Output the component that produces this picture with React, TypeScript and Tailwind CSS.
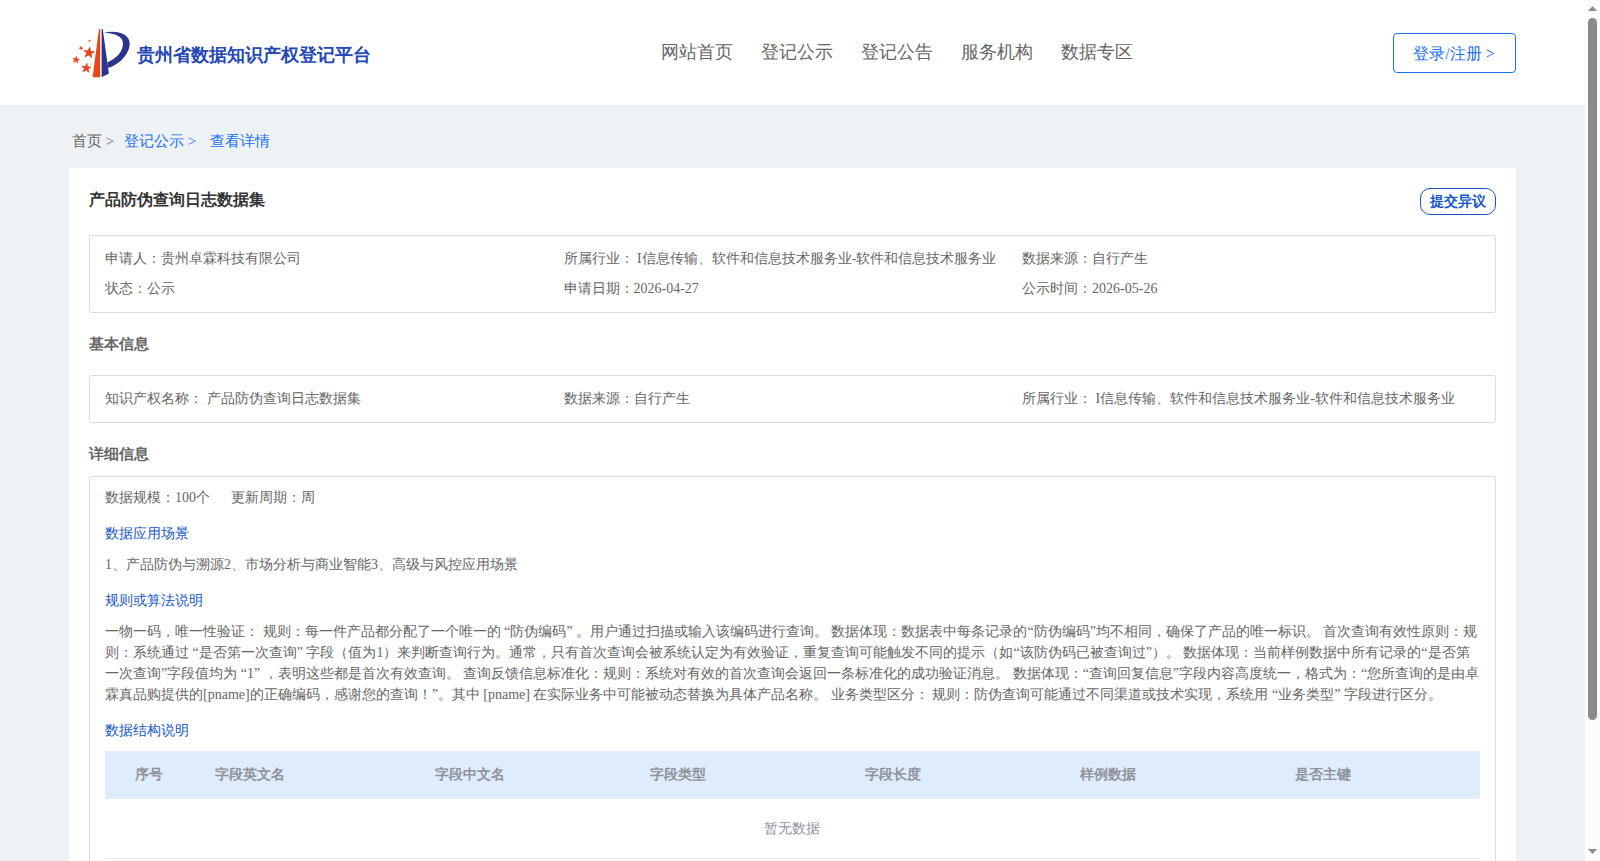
import React from 'react'

const NAV_ITEMS = ['网站首页', '登记公示', '登记公告', '服务机构', '数据专区']

const SUMMARY = [
  '申请人：贵州卓霖科技有限公司',
  '所属行业： I信息传输、软件和信息技术服务业-软件和信息技术服务业',
  '数据来源：自行产生',
  '状态：公示',
  '申请日期：2026-04-27',
  '公示时间：2026-05-26',
]

const BASIC = [
  '知识产权名称： 产品防伪查询日志数据集',
  '数据来源：自行产生',
  '所属行业： I信息传输、软件和信息技术服务业-软件和信息技术服务业',
]

const RULES =
  '一物一码，唯一性验证： 规则：每一件产品都分配了一个唯一的 “防伪编码” 。用户通过扫描或输入该编码进行查询。 数据体现：数据表中每条记录的“防伪编码”均不相同，确保了产品的唯一标识。 首次查询有效性原则：规则：系统通过 “是否第一次查询” 字段（值为1）来判断查询行为。通常，只有首次查询会被系统认定为有效验证，重复查询可能触发不同的提示（如“该防伪码已被查询过”）。 数据体现：当前样例数据中所有记录的“是否第一次查询”字段值均为 “1” ，表明这些都是首次有效查询。 查询反馈信息标准化：规则：系统对有效的首次查询会返回一条标准化的成功验证消息。 数据体现：“查询回复信息”字段内容高度统一，格式为：“您所查询的是由卓霖真品购提供的[pname]的正确编码，感谢您的查询！”。其中 [pname] 在实际业务中可能被动态替换为具体产品名称。 业务类型区分： 规则：防伪查询可能通过不同渠道或技术实现，系统用 “业务类型” 字段进行区分。'

const COLUMNS = ['字段英文名', '字段中文名', '字段类型', '字段长度', '样例数据', '是否主键']

const STAR = '0,-1 .25,-.32 .95,-.31 .4,.12 .59,.81 0,.4 -.59,.81 -.4,.12 -.95,-.31 -.25,-.32'

const STARS = [
  { x: 17, y: 24.8, r: 5.4, a: 8 },
  { x: 14.3, y: 40.2, r: 4.7, a: 5 },
  { x: 4, y: 31.8, r: 3.5, a: 10 },
  { x: 9, y: 20, r: 2.1, a: 30 },
  { x: 17.6, y: 12.9, r: 1.3, a: 10 },
]

const Logo: React.FC = () => (
  <svg className="h-[50px] w-[58px]" viewBox="0 0 58 50">
    {STARS.map((s) => (
      <polygon
        key={s.x + s.y}
        points={STAR}
        fill="#e8431a"
        stroke="#e8431a"
        strokeWidth={0.16}
        transform={`translate(${s.x} ${s.y}) rotate(${s.a}) scale(${s.r})`}
      />
    ))}
    <path d="M27 1h1.2v48.3h-7.6z" fill="#e64516" />
    <path d="M29.6 1h1.1l6.2 44.6-7.3 3.7z" fill="#2b3488" />
    <path d="M32.5 4.4C46 2 57.7 6 57.7 15.5 57.7 26 47 37 36 39.8l-.6-5.4C44 30.5 50.5 24.5 51 16 51.3 8.4 43 5.4 32.5 4.8z" fill="#2b3488" />
  </svg>
)

const SubTitle: React.FC<{ children: React.ReactNode }> = ({ children }) => (
  <h4 className="leading-[21px] text-[#1557cc]">{children}</h4>
)

const InfoBox: React.FC<{ items: string[] }> = ({ items }) => (
  <div className="grid grid-cols-[458.5px_458.6px_1fr] rounded-[3px] border border-[#dcdcdc] px-[15px] pt-2 pb-2">
    {items.map((item, i) => (
      <div key={i} className="h-[30px] leading-[30px] whitespace-nowrap">{item}</div>
    ))}
  </div>
)

export default function App() {
  return (
    <div className="flex h-[861px] overflow-hidden bg-[#eef2f5] font-['Liberation_Serif',serif] text-sm text-[#666]">
      <div className="w-[1585px]">
        <header className="flex h-[105px] items-start bg-white pr-[69px] pl-[72px]">
          <div className="flex w-[588.5px] items-center pt-7">
            <Logo />
            <span className="ml-[7px] pt-1 text-lg leading-6 font-bold text-[#2347b5]">贵州省数据知识产权登记平台</span>
          </div>
          <nav className="flex gap-7 pt-[38px] text-lg leading-7">
            {NAV_ITEMS.map((item) => (
              <a key={item} className="whitespace-nowrap">{item}</a>
            ))}
          </nav>
          <button className="mt-[33px] ml-auto h-10 w-[123px] rounded border border-[#1a70f2] pt-px pr-px text-base text-[#1a70f2]">
            登录/注册 &gt;
          </button>
        </header>

        <div className="flex h-[63px] items-center pt-[10px] pl-[72px] text-[15px] whitespace-pre text-[#1a70f2]">
          <span className="w-[52px] text-[#666]">首页 &gt;</span>
          <span className="w-[86px]">登记公示 &gt;</span>
          <span>查看详情</span>
        </div>

        <main className="mx-[69px] h-[900px] bg-white px-5 pt-5">
          <div className="flex h-[47px] items-start justify-between">
            <h2 className="text-base leading-6 font-bold text-[#333]">产品防伪查询日志数据集</h2>
            <button className="h-[27px] w-[76px] rounded-[10px] border border-[#1557cc] text-sm font-bold text-[#1557cc]">
              提交异议
            </button>
          </div>

          <InfoBox items={SUMMARY} />
          <h3 className="h-[62px] text-[15px] leading-[62px] font-bold">基本信息</h3>
          <InfoBox items={BASIC} />
          <h3 className="h-[53px] text-[15px] leading-[62px] font-bold">详细信息</h3>

          <section className="h-[500px] rounded-[3px] border border-[#dcdcdc] px-[15px] pt-[10px] leading-[21px]">
            <div className="mb-[15px] flex gap-[21px]">
              <span>数据规模：100个</span>
              <span>更新周期：周</span>
            </div>
            <SubTitle>数据应用场景</SubTitle>
            <p className="mt-[10px] mb-[15px]">1、产品防伪与溯源2、市场分析与商业智能3、高级与风控应用场景</p>
            <SubTitle>规则或算法说明</SubTitle>
            <p className="mt-[10px] mb-[15px]">{RULES}</p>
            <SubTitle>数据结构说明</SubTitle>

            <div className="mt-[10px] grid h-12 grid-cols-[100px_220px_repeat(5,215px)] items-center border-b border-[#ebeef5] bg-[#dfecfe] font-bold text-[#909399]">
              <span className="pl-[30px]">序号</span>
              {COLUMNS.map((col) => (
                <span key={col} className="pl-[10px]">{col}</span>
              ))}
            </div>
            <div className="flex h-[60px] items-center justify-center border-b border-[#ebeef5] pr-px text-[#909399]">暂无数据</div>
          </section>
        </main>
      </div>

      {/* Scrollbar */}
      <div className="flex w-[15px] flex-col items-center justify-between bg-[#fcfcfc] pt-[6px] pb-[7px]">
        <div className="flex flex-col items-center gap-[7px]">
          <svg className="h-[5px] w-[9px]" viewBox="0 0 9 5"><path d="M0 5 4.5 0 9 5z" fill="#8b8b8b" /></svg>
          <div className="h-[702px] w-[9px] rounded-full bg-[#8b8b8b]" />
        </div>
        <svg className="h-[5px] w-[9px]" viewBox="0 0 9 5"><path d="M0 0h9L4.5 5z" fill="#8b8b8b" /></svg>
      </div>
    </div>
  )
}
